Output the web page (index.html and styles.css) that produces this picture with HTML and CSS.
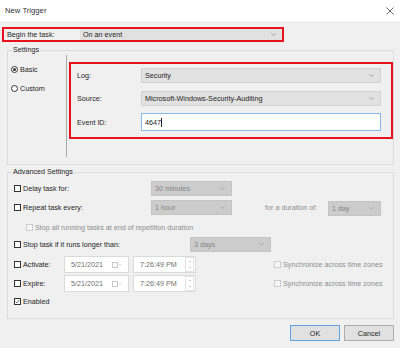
FILE: index.html
```html
<!DOCTYPE html>
<html lang="en">
<head>
    <meta charset="UTF-8">
    <meta name="viewport" content="width=device-width, initial-scale=1.0">
    <title>New Trigger</title>
    <link rel="stylesheet" href="styles.css">
</head>
<body>

    <div class="titlebar">
        <span class="title">New Trigger</span>
        <svg class="close" width="8" height="8" viewBox="0 0 8 8">
            <path d="M0.5 0.5 L7.5 7.5 M7.5 0.5 L0.5 7.5" stroke="#444" stroke-width="0.8" fill="none"/>
        </svg>
    </div>

    <div class="dialog">
        <div class="begin-row highlight">
            <span class="begin-label">Begin the task:</span>
            <div class="combo begin-combo">
                <span>On an event</span>
                <svg class="chev" width="5" height="3" viewBox="0 0 5 3"><path d="M0.3 0.3 L2.5 2.5 L4.7 0.3" stroke="#888" stroke-width="0.7" fill="none"/></svg>
            </div>
        </div>

        <fieldset class="group settings">
            <legend>Settings</legend>
            <div class="settings-body">
                <div class="mode-col">
                    <div class="radio"><span class="dot checked"></span>Basic</div>
                    <div class="radio"><span class="dot"></span>Custom</div>
                </div>
                <div class="divider"></div>
                <div class="event-box highlight">
                    <div class="field-row">
                        <span class="field-label">Log:</span>
                        <div class="combo">
                            <span>Security</span>
                            <svg class="chev" width="5" height="3" viewBox="0 0 5 3"><path d="M0.3 0.3 L2.5 2.5 L4.7 0.3" stroke="#888" stroke-width="0.7" fill="none"/></svg>
                        </div>
                    </div>
                    <div class="field-row source-row">
                        <span class="field-label">Source:</span>
                        <div class="combo">
                            <span>Microsoft-Windows-Security-Auditing</span>
                            <svg class="chev" width="5" height="3" viewBox="0 0 5 3"><path d="M0.3 0.3 L2.5 2.5 L4.7 0.3" stroke="#888" stroke-width="0.7" fill="none"/></svg>
                        </div>
                    </div>
                    <div class="field-row id-row">
                        <span class="field-label">Event ID:</span>
                        <div class="textbox">4647<span class="caret"></span></div>
                    </div>
                </div>
            </div>
        </fieldset>

        <fieldset class="group advanced">
            <legend>Advanced Settings</legend>
            <div class="adv-body">
                <div class="adv-row delay-row">
                    <div class="check-label w-137"><span class="box"></span>Delay task for:</div>
                    <div class="combo disabled w-81">
                        <span>30 minutes</span>
                        <svg class="chev" width="5" height="3" viewBox="0 0 5 3"><path d="M0.3 0.3 L2.5 2.5 L4.7 0.3" stroke="#999" stroke-width="0.7" fill="none"/></svg>
                    </div>
                </div>
                <div class="adv-row repeat-row">
                    <div class="check-label w-137"><span class="box"></span>Repeat task every:</div>
                    <div class="combo disabled w-81">
                        <span>1 hour</span>
                        <svg class="chev" width="5" height="3" viewBox="0 0 5 3"><path d="M0.3 0.3 L2.5 2.5 L4.7 0.3" stroke="#999" stroke-width="0.7" fill="none"/></svg>
                    </div>
                    <span class="muted duration-label">for a duration of:</span>
                    <div class="combo disabled w-53 day-combo">
                        <span>1 day</span>
                        <svg class="chev" width="5" height="3" viewBox="0 0 5 3"><path d="M0.3 0.3 L2.5 2.5 L4.7 0.3" stroke="#999" stroke-width="0.7" fill="none"/></svg>
                    </div>
                </div>
                <div class="adv-row stopall-row">
                    <div class="check-label muted indent"><span class="box off"></span>Stop all running tasks at end of repetition duration</div>
                </div>
                <div class="adv-row stop-row">
                    <div class="check-label w-176"><span class="box"></span>Stop task if it runs longer than:</div>
                    <div class="combo disabled w-81">
                        <span>3 days</span>
                        <svg class="chev" width="5" height="3" viewBox="0 0 5 3"><path d="M0.3 0.3 L2.5 2.5 L4.7 0.3" stroke="#999" stroke-width="0.7" fill="none"/></svg>
                    </div>
                </div>
                <div class="adv-row date-row activate-row">
                    <div class="check-label w-50"><span class="box"></span>Activate:</div>
                    <div class="datebox">
                        <span>5/21/2021</span>
                        <span class="cal"><span class="cal-box"></span><span class="cal-arrow"></span></span>
                    </div>
                    <div class="timebox">
                        <span>7:26:49 PM</span>
                        <span class="spin"><span class="up"></span><span class="down"></span></span>
                    </div>
                    <div class="check-label muted sync"><span class="box off"></span>Synchronize across time zones</div>
                </div>
                <div class="adv-row date-row expire-row">
                    <div class="check-label w-50"><span class="box"></span>Expire:</div>
                    <div class="datebox">
                        <span>5/21/2021</span>
                        <span class="cal"><span class="cal-box"></span><span class="cal-arrow"></span></span>
                    </div>
                    <div class="timebox">
                        <span>7:26:49 PM</span>
                        <span class="spin"><span class="up"></span><span class="down"></span></span>
                    </div>
                    <div class="check-label muted sync"><span class="box off"></span>Synchronize across time zones</div>
                </div>
                <div class="adv-row enabled-row">
                    <div class="check-label">
                        <span class="box">
                            <svg width="5" height="5" viewBox="0 0 5 5"><path d="M0.6 2.6 L1.9 3.9 L4.4 1" stroke="#333" stroke-width="0.7" fill="none"/></svg>
                        </span>Enabled
                    </div>
                </div>
            </div>
        </fieldset>

        <div class="buttons">
            <button class="default">OK</button>
            <button>Cancel</button>
        </div>
    </div>

</body>
</html>
```

FILE: styles.css
```css
body {
    margin: 0;
    width: 400px;
    height: 348px;
    overflow: hidden;
    background-color: #f0f0f0;
    font-family: "Liberation Sans", Arial, sans-serif;
    font-size: 7.2px;
    color: #1e1e1e;
}
.titlebar {
    height: 21px;
    background: white;
    display: flex;
    align-items: center;
    justify-content: space-between;
    padding: 0 6px 0 5px;
}
.title {
    font-size: 7.7px;
    color: #333;
}
.dialog {
    padding: 0 6px 0 7px;
}
.highlight {
    border: 2px solid #e8121e;
    box-sizing: border-box;
}
.begin-row {
    margin: 6px 0 0 -5px;
    width: 282px;
    height: 15px;
    display: flex;
    align-items: center;
}
.begin-label {
    width: 73px;
    padding-left: 3px;
}
.combo {
    flex: 1;
    height: 15px;
    box-sizing: border-box;
    background: #e1e1e1;
    border: 1px solid #d2d2d2;
    display: flex;
    align-items: center;
    justify-content: space-between;
    padding: 0 6px 0 3px;
}
.begin-combo {
    height: 11px;
    border: none;
}
.combo.disabled {
    flex: none;
    background: #cccccc;
    border-color: #c4c4c4;
    color: #858585;
}
.w-81 { width: 81px; }
.w-53 { width: 53px; }
.w-137 { width: 137px; }
.w-176 { width: 176px; }
.w-50 { width: 50px; }

.group {
    margin: 0;
    padding: 0;
    min-width: 0;
    border: 1px solid #dcdcdc;
}
.group legend {
    margin-left: 4px;
    padding: 0 1px;
    line-height: 10px;
}
.settings {
    margin-top: 3px;
}
.settings-body {
    display: flex;
    height: 109px;
}
.mode-col {
    width: 61px;
    padding-top: 9px;
    display: flex;
    flex-direction: column;
    gap: 9px;
}
.radio {
    display: flex;
    align-items: center;
    height: 10px;
    padding-left: 3px;
}
.dot {
    width: 7px;
    height: 7px;
    box-sizing: border-box;
    border: 1px solid #333;
    border-radius: 50%;
    background: white;
    margin-right: 2px;
    display: flex;
    align-items: center;
    justify-content: center;
}
.dot.checked::after {
    content: "";
    width: 3px;
    height: 3px;
    border-radius: 50%;
    background: #333;
}
.divider {
    width: 1px;
    height: 102px;
    background: #a9a9a9;
}
.event-box {
    flex: none;
    margin: 7px 0 0 2px;
    width: 324px;
    height: 77px;
    padding: 4px 10px 0 6px;
}
.field-row {
    display: flex;
    align-items: center;
    height: 15px;
}
.source-row {
    margin-top: 8px;
}
.id-row {
    margin-top: 7px;
    height: 18px;
}
.field-label {
    width: 64px;
}
.textbox {
    flex: 1;
    height: 18px;
    box-sizing: border-box;
    background: white;
    border: 1px solid #86bbe9;
    display: flex;
    align-items: center;
    padding-left: 3px;
}
.caret {
    width: 1px;
    height: 9px;
    background: #222;
}

.advanced {
    margin-top: 2px;
}
.adv-body {
    height: 138px;
    padding-left: 6px;
}
.adv-row {
    display: flex;
    align-items: center;
    height: 16px;
}
.delay-row { margin-top: 3px; }
.repeat-row { margin-top: 3px; }
.stopall-row { margin-top: 4px; }
.stop-row { margin-top: 1px; }
.activate-row { margin-top: 4px; }
.expire-row { margin-top: 2px; }
.enabled-row { margin-top: 1px; }
.date-row {
    height: 17px;
}
.check-label {
    display: flex;
    align-items: center;
    flex: none;
}
.box {
    width: 7px;
    height: 7px;
    box-sizing: border-box;
    border: 1px solid #333;
    background: white;
    margin-right: 2px;
    display: flex;
    align-items: center;
    justify-content: center;
}
.box.off {
    border-color: #cdcdcd;
    background: #f6f6f6;
}
.muted {
    color: #8e8e8e;
}
.indent {
    padding-left: 12px;
}
.duration-label {
    margin-left: 33px;
    width: 63px;
}
.day-combo {
    align-self: flex-end;
    margin-bottom: -1px;
}
.datebox, .timebox {
    height: 17px;
    box-sizing: border-box;
    background: white;
    border: 1px solid #dadada;
    color: #707070;
    display: flex;
    align-items: center;
    justify-content: space-between;
}
.datebox {
    width: 65px;
    padding: 0 7px 0 6px;
}
.timebox {
    width: 63px;
    margin-left: 4px;
    padding: 0 1px 0 6px;
}
.cal {
    display: flex;
    align-items: center;
    gap: 1px;
}
.cal-box {
    width: 4px;
    height: 4px;
    border: 1px solid #c8c8c8;
}
.cal-arrow {
    width: 0;
    height: 0;
    border-left: 1.5px solid transparent;
    border-right: 1.5px solid transparent;
    border-top: 1.5px solid #aaa;
}
.spin {
    width: 7px;
    height: 13px;
    border: 1px solid #e4e4e4;
    display: flex;
    flex-direction: column;
    align-items: center;
    justify-content: space-around;
}
.spin .up {
    border-left: 1.5px solid transparent;
    border-right: 1.5px solid transparent;
    border-bottom: 1.5px solid #999;
}
.spin .down {
    border-left: 1.5px solid transparent;
    border-right: 1.5px solid transparent;
    border-top: 1.5px solid #999;
}
.sync {
    margin-left: 78px;
}

.buttons {
    display: flex;
    justify-content: flex-end;
    gap: 4px;
    margin-top: 6px;
}
button {
    width: 50px;
    height: 16px;
    padding: 0;
    background: #e1e1e1;
    border: 1px solid #adadad;
    font-family: inherit;
    font-size: 7.2px;
    color: #1e1e1e;
}
button.default {
    border-color: #5fa3e2;
}
```
